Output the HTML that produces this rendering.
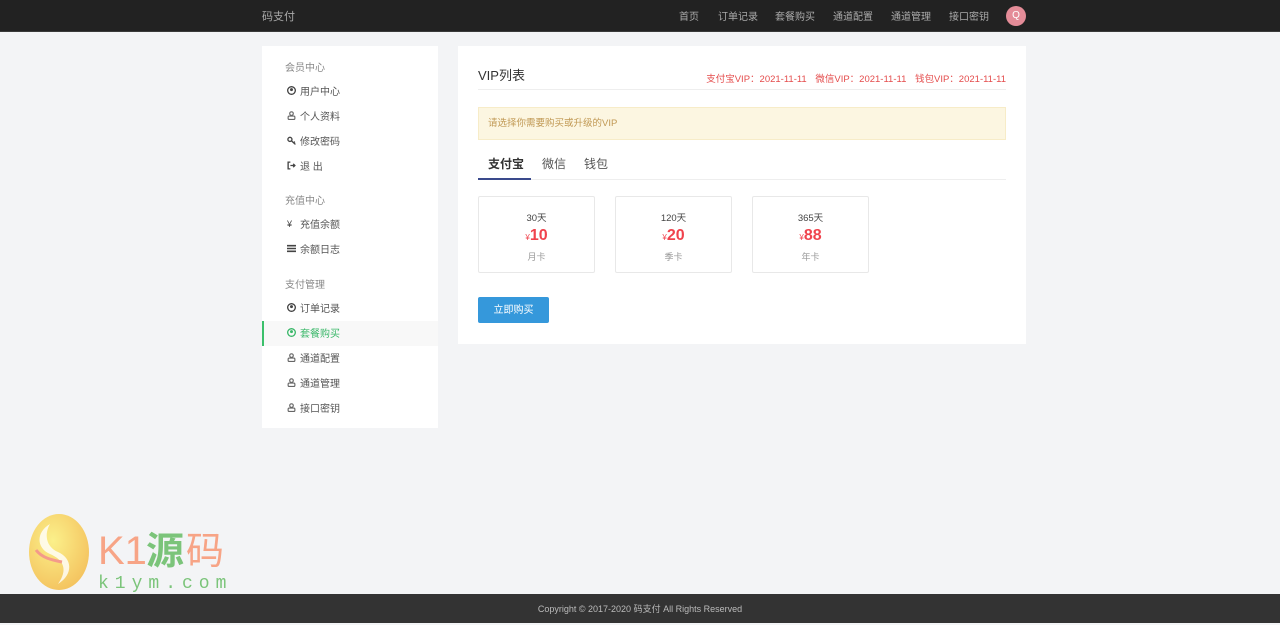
<!DOCTYPE html>
<html><head><meta charset="utf-8"><style>
*{margin:0;padding:0;box-sizing:border-box}
body{width:1280px;height:623px;background:#f3f4f6;font-family:"Liberation Sans","Noto Sans CJK SC",sans-serif;font-size:10px;color:#555;position:relative;overflow:hidden}
.hd{position:absolute;left:0;top:0;width:1280px;height:32px;background:#222;border-bottom:1px solid #3a3a3a}
.hd .logo{position:absolute;left:262px;top:8px;color:#aaa;font-size:11px}
.hd .nav{position:absolute;top:8px;color:#aaa;font-size:10px}
.av{position:absolute;left:1006px;top:6px;width:20px;height:20px;border-radius:50%;background:#e48c98;color:#fff;font-size:10px;text-align:center;line-height:20px}
.sb{position:absolute;left:262px;top:46px;width:176px;height:382px;background:#fff}
.sb .h{position:absolute;left:23px;color:#888;font-size:10px}
.sb .i{position:absolute;left:25px;color:#555;font-size:10px;display:flex;align-items:center;gap:4px}
.ic{width:9px;height:9px;display:inline-block}
.act{position:absolute;left:0;top:275px;width:176px;height:25px;background:#f8f8f8;border-left:2px solid #3bc06b}
.mn{position:absolute;left:458px;top:46px;width:568px;height:298px;background:#fff}
.ttl{position:absolute;left:20px;top:19px;font-size:13px;color:#333}
.vip{position:absolute;right:20px;top:25px;font-size:9.5px;color:#e44c4c;word-spacing:6px}
.ln{position:absolute;left:20px;top:43px;width:528px;height:1px;background:#eee}
.al{position:absolute;left:20px;top:61px;width:528px;height:33px;background:#fcf6e1;border:1px solid #f7ecc8;color:#c09853;font-size:9.5px;padding:7px 9px}
.tab{position:absolute;top:109px;font-size:12px;color:#555}
.tl{position:absolute;left:20px;top:133px;width:528px;height:1px;background:#eee}
.tu{position:absolute;left:20px;top:132px;width:53px;height:2px;background:#3a4a8c}
.cd{position:absolute;top:150px;width:117px;height:77px;border:1px solid #e8e8e8;border-radius:2px;text-align:center}
.cd .d{margin-top:13px;font-size:9.5px;color:#444}
.cd .p{color:#f0434d;font-size:16px;font-weight:bold;line-height:24px}
.cd .p small{font-size:8px;font-weight:normal}
.cd .n{color:#999;font-size:9px;margin-top:0}
.btn{position:absolute;left:20px;top:251px;width:71px;height:26px;background:#3598db;border-radius:2px;color:#fff;font-size:10px;text-align:center;line-height:27px}
.ft{position:absolute;left:0;top:594px;width:1280px;height:29px;background:#333;color:#bbb;font-size:9px;text-align:center;line-height:31px}
</style></head><body>
<div class="hd"><div class="logo">码支付</div>
<span class="nav" style="left:679px">首页</span>
<span class="nav" style="left:718px">订单记录</span>
<span class="nav" style="left:775px">套餐购买</span>
<span class="nav" style="left:833px">通道配置</span>
<span class="nav" style="left:891px">通道管理</span>
<span class="nav" style="left:949px">接口密钥</span>
<div class="av">Q</div></div>

<div class="sb">
<div class="act"></div>
<div class="h" style="top:13px">会员中心</div>
<div class="i" style="top:37px"><svg class="ic" viewBox="0 0 8 8"><circle cx="4" cy="4" r="3.4" fill="none" stroke="#444" stroke-width="1.2"/><circle cx="4" cy="3.2" r="1.3" fill="#444"/></svg>用户中心</div>
<div class="i" style="top:62px"><svg class="ic" viewBox="0 0 8 8"><circle cx="4" cy="2.3" r="1.6" fill="none" stroke="#666"/><rect x="1" y="4.5" width="6" height="3" rx="1" fill="none" stroke="#666"/></svg>个人资料</div>
<div class="i" style="top:87px"><svg class="ic" viewBox="0 0 8 8"><circle cx="2.6" cy="3" r="1.8" fill="none" stroke="#444" stroke-width="1.2"/><path d="M4 4.3L7.5 7.5M6 6l1-1" stroke="#444" stroke-width="1.2"/></svg>修改密码</div>
<div class="i" style="top:112px"><svg class="ic" viewBox="0 0 8 8"><path d="M3 1H1v6h2M3 4h4M5.5 2.5L7 4 5.5 5.5" fill="none" stroke="#444" stroke-width="1.2"/></svg>退 出</div>
<div class="h" style="top:146px">充值中心</div>
<div class="i" style="top:170px"><span style="width:9px;font-size:9px;color:#444">¥</span>充值余额</div>
<div class="i" style="top:195px"><svg class="ic" viewBox="0 0 8 8"><path d="M0 1.5h8M0 4h8M0 6.5h8" stroke="#444" stroke-width="1.4"/></svg>余额日志</div>
<div class="h" style="top:230px">支付管理</div>
<div class="i" style="top:254px"><svg class="ic" viewBox="0 0 8 8"><circle cx="4" cy="4" r="3.4" fill="none" stroke="#444" stroke-width="1.2"/><circle cx="4" cy="3.2" r="1.3" fill="#444"/></svg>订单记录</div>
<div class="i" style="top:279px;color:#3bb86a"><svg class="ic" viewBox="0 0 8 8"><circle cx="4" cy="4" r="3.4" fill="none" stroke="#3bb86a" stroke-width="1.2"/><circle cx="4" cy="3.2" r="1.3" fill="#3bb86a"/></svg>套餐购买</div>
<div class="i" style="top:304px"><svg class="ic" viewBox="0 0 8 8"><circle cx="4" cy="2.3" r="1.6" fill="none" stroke="#666"/><rect x="1" y="4.5" width="6" height="3" rx="1" fill="none" stroke="#666"/></svg>通道配置</div>
<div class="i" style="top:329px"><svg class="ic" viewBox="0 0 8 8"><circle cx="4" cy="2.3" r="1.6" fill="none" stroke="#666"/><rect x="1" y="4.5" width="6" height="3" rx="1" fill="none" stroke="#666"/></svg>通道管理</div>
<div class="i" style="top:354px"><svg class="ic" viewBox="0 0 8 8"><circle cx="4" cy="2.3" r="1.6" fill="none" stroke="#666"/><rect x="1" y="4.5" width="6" height="3" rx="1" fill="none" stroke="#666"/></svg>接口密钥</div>
</div>

<div class="mn">
<div class="ttl">VIP列表</div>
<div class="vip">支付宝VIP：2021-11-11 微信VIP：2021-11-11 钱包VIP：2021-11-11</div>
<div class="ln"></div>
<div class="al">请选择你需要购买或升级的VIP</div>
<div class="tab" style="left:30px;font-weight:bold;color:#333">支付宝</div>
<div class="tab" style="left:84px">微信</div>
<div class="tab" style="left:126px">钱包</div>
<div class="tl"></div><div class="tu"></div>
<div class="cd" style="left:20px"><div class="d">30天</div><div class="p"><small>¥</small>10</div><div class="n">月卡</div></div>
<div class="cd" style="left:157px"><div class="d">120天</div><div class="p"><small>¥</small>20</div><div class="n">季卡</div></div>
<div class="cd" style="left:294px"><div class="d">365天</div><div class="p"><small>¥</small>88</div><div class="n">年卡</div></div>
<div class="btn">立即购买</div>
</div>

<svg style="position:absolute;left:28px;top:512px" width="210" height="82">
<defs><radialGradient id="g" cx="0.4" cy="0.35" r="0.7"><stop offset="0" stop-color="#fbf08a"/><stop offset="1" stop-color="#f4c25e"/></radialGradient></defs>
<ellipse cx="31" cy="40" rx="30" ry="38" fill="url(#g)"/>
<path d="M22 12C8 20 8 36 22 42C36 48 40 58 30 72C46 62 44 46 30 40C18 35 16 22 22 12Z" fill="#fff" opacity="0.8"/>
<path d="M8 38C14 46 24 48 34 50" stroke="#f49a8a" stroke-width="3" fill="none"/>
<text x="70" y="52" font-size="40" fill="#f7a486" font-family="Liberation Sans,sans-serif">K1</text>
<text x="118" y="52" font-size="38" fill="#7bc47a" font-weight="bold" font-family="Noto Sans CJK SC,sans-serif">源</text>
<text x="158" y="52" font-size="38" fill="#f7a486" font-family="Noto Sans CJK SC,sans-serif">码</text>
<text x="70" y="76" font-size="18" fill="#7bc47a" letter-spacing="6" font-family="Liberation Mono,monospace">k1ym.com</text>
</svg>

<div class="ft">Copyright © 2017-2020 码支付 All Rights Reserved</div>
</body></html>
